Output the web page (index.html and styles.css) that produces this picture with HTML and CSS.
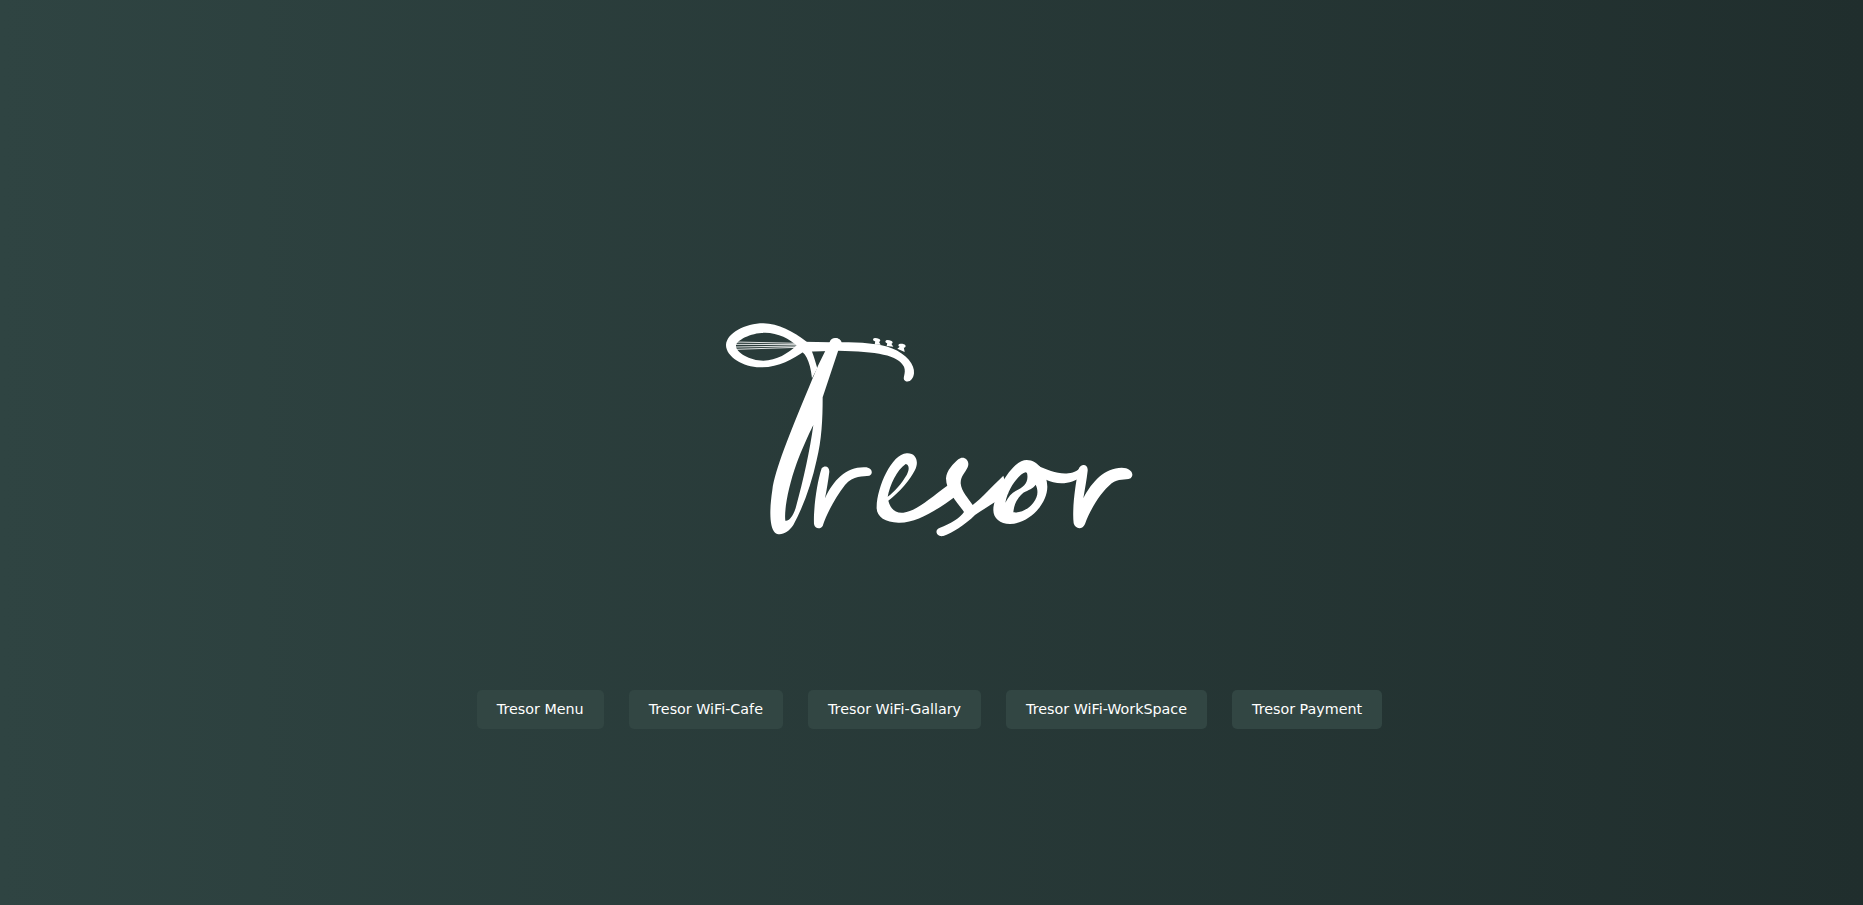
FILE: index.html
```html
<!DOCTYPE html>
<html lang="en">
<head>
<meta charset="utf-8">
<title>Tresor</title>
<link rel="stylesheet" href="styles.css">
</head>
<body>
<main class="page">
  <svg class="logo" viewBox="0 0 1320 720" role="img" aria-label="Tresor logo">
    <g class="ink">
      <path fill-rule="evenodd" d="M48,105 C50,70 105,40 160,40 C205,40 250,65 290,95 L285,122 C245,150 205,172 150,172 C100,172 48,140 48,105Z M78,108 C78,90 125,68 165,68 C205,68 240,88 260,106 C235,130 200,152 160,152 C120,152 78,128 78,108Z"/>
      <path d="M280,95 L360,97 C365,82 390,80 395,97 C450,97 510,100 545,115 C590,132 615,165 612,190 C610,210 595,220 585,212 C575,205 590,190 582,170 C565,135 500,124 385,122 L285,125Z"/>
      <path fill-rule="evenodd" d="M362,90 C370,80 392,82 392,100 L338,262 C338,330 335,390 320,450 C305,520 280,590 250,645 C235,668 210,680 195,668 C178,650 178,600 187,540 C195,480 235,380 308,205 L325,165Z M310,345 C300,420 280,510 258,590 C250,620 235,635 226,632 C222,600 235,530 260,460 C275,420 295,375 310,345Z"/>
      <path d="M262,118 C285,125 300,150 306,205 L322,175 C318,160 312,140 305,122Z"/>
      <ellipse cx="500" cy="90" rx="11" ry="5.5" transform="rotate(12 500 90)"/>
      <ellipse cx="537" cy="96" rx="11" ry="5.5" transform="rotate(12 537 96)"/>
      <ellipse cx="576" cy="107" rx="11" ry="5.5" transform="rotate(12 576 107)"/>
      <path d="M496,92 L505,92 L512,104 L494,104Z M532,98 L542,98 L550,110 L530,108Z M571,109 L581,110 L584,126 L562,116Z"/>
      <path d="M335,475 C345,465 358,470 358,485 C355,510 350,540 345,565 C370,510 410,470 465,472 C485,472 492,490 478,497 C460,500 430,495 405,525 C375,565 350,610 338,648 C332,658 315,658 312,642 C310,600 320,520 335,475Z"/>
      <path fill-rule="evenodd" d="M500,590 C502,530 545,432 590,430 C618,428 628,455 615,480 C600,510 570,545 535,572 C542,597 555,610 580,608 C620,603 660,565 715,525 L735,560 C680,600 620,640 565,638 C525,637 498,620 500,590Z M587,462 C600,465 597,482 590,495 C575,520 555,545 533,560 C540,525 560,480 587,462Z"/>
      <path d="M745,448 C760,435 782,450 773,472 C765,490 752,498 752,520 C754,545 775,565 788,585 C815,565 845,530 880,497 L895,550 C865,570 825,595 795,615 C765,645 725,670 700,678 C678,682 672,658 690,653 C720,642 750,625 762,606 C745,580 708,545 708,505 C710,480 730,462 745,448Z"/>
      <path fill-rule="evenodd" d="M850,600 C852,550 905,450 950,450 C985,450 1012,490 1012,530 C1012,580 960,640 900,642 C870,642 850,625 850,600Z M947,487 C930,490 895,530 886,578 C895,560 905,548 918,542 C940,532 955,518 952,495 C952,490 950,487 947,487Z M977,524 C985,540 985,560 970,578 C955,598 930,610 910,607 C912,585 920,565 940,548 C955,540 970,535 977,524Z"/>
      <path d="M985,468 C1010,478 1045,494 1075,490 C1095,487 1105,480 1115,470 L1112,500 C1090,520 1045,528 1005,508Z"/>
      <path d="M1105,480 C1110,460 1135,460 1133,482 C1130,510 1125,535 1120,565 C1145,515 1185,473 1235,473 C1262,473 1275,492 1262,505 C1245,512 1225,505 1205,520 C1170,550 1140,600 1125,642 C1118,660 1095,658 1091,640 C1086,600 1095,530 1105,480Z"/>
    </g>
    <g class="strings">
      <path d="M78,96 L262,100 M78,103 L262,104 M78,111 L262,108 M78,118 L262,112"/>
    </g>
  </svg>
  <nav class="links">
    <a class="link" href="#">Tresor Menu</a>
    <a class="link" href="#">Tresor WiFi-Cafe</a>
    <a class="link" href="#">Tresor WiFi-Gallary</a>
    <a class="link" href="#">Tresor WiFi-WorkSpace</a>
    <a class="link" href="#">Tresor Payment</a>
  </nav>
</main>
</body>
</html>
```
FILE: styles.css
```css
* { box-sizing: border-box; }
html, body { margin: 0; height: 100%; }
body {
  background: linear-gradient(to right, #2f4442, #202e2d);
  font-family: "DejaVu Sans", sans-serif;
  overflow: hidden;
}
.page {
  display: flex;
  flex-direction: column;
  align-items: center;
  gap: 140px;
  padding: 310px 4px 0 0;
}
.logo { display: block; width: 440px; height: 240px; }
.ink { fill: #fff; }
.strings { fill: none; stroke: #fff; stroke-width: 2.6; }
.links { display: flex; gap: 25px; }
.link {
  display: block;
  height: 39px;
  padding: 0 20px;
  line-height: 39px;
  font-size: 14.3px;
  color: #fff;
  text-decoration: none;
  white-space: nowrap;
  background: #324643;
  border-radius: 5px;
}
```
